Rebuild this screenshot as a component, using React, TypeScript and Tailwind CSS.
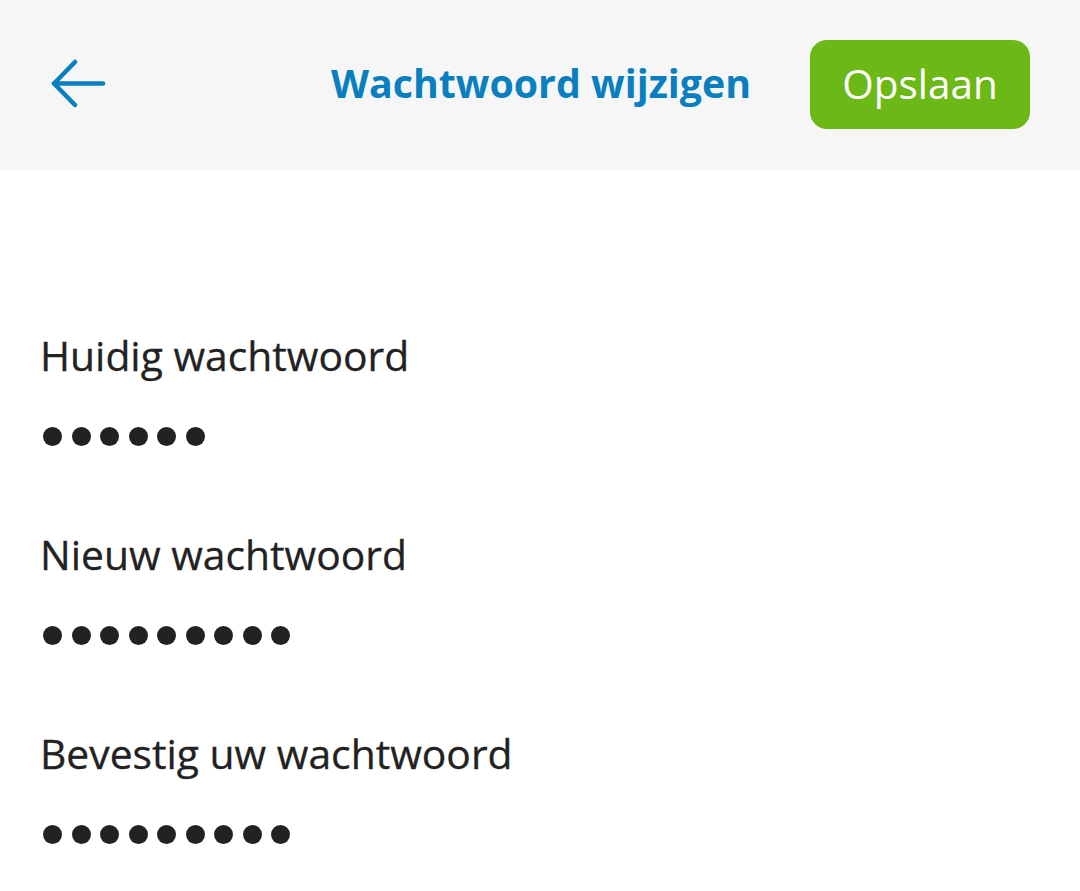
import React from 'react';

const fields = [
  { label: 'Huidig wachtwoord', length: 6 },
  { label: 'Nieuw wachtwoord', length: 9 },
  { label: 'Bevestig uw wachtwoord', length: 9 },
];

// Masked value, one dot per character
const Dots = ({ count }: { count: number }) => (
  <div className="flex items-center gap-[9.5px] pl-[43px]">
    {Array.from({ length: count }).map((_, i) => (
      <span key={i} className="block h-[19px] w-[19px] rounded-full bg-[#222222]" />
    ))}
  </div>
);

export default function App() {
  return (
    <div className="min-h-screen bg-white" style={{ fontFamily: '"Open Sans", sans-serif' }}>
      {/* top bar */}
      <div className="flex h-[170px] items-center bg-[#f6f6f6] pb-[2px] pr-[50px]">
        <button className="ml-[50px] flex h-[50px] w-[58px] items-center justify-center">
          <svg width="58" height="50" viewBox="0 0 58 50" fill="none" stroke="#0a7fc0" strokeWidth="4.5" strokeLinecap="round" strokeLinejoin="round">
            <path d="M53 24.5H4" />
            <path d="M25 3L4 24.5L25 46" />
          </svg>
        </button>
        <div className="relative ml-[223px] flex-1">
          <h1 className="whitespace-nowrap text-[39.3px] font-bold leading-none text-[#0a7fc0]">Wachtwoord wijzigen</h1>
        </div>
        <button className="flex h-[89px] w-[220px] items-center justify-center rounded-[17px] bg-[#6cb817] text-[40.5px] text-white">
          Opslaan
        </button>
      </div>

      {/* form */}
      <div className="pt-[150px]">
        {fields.map((f) => (
          <div key={f.label} className="h-[199px]">
            <div className="pl-[40px] text-[40.8px] leading-[70px] text-[#222222] [-webkit-text-stroke:0.3px_#222222]">{f.label}</div>
            <div className="pt-[37px]">
              <Dots count={f.length} />
            </div>
          </div>
        ))}
      </div>
    </div>
  );
}
